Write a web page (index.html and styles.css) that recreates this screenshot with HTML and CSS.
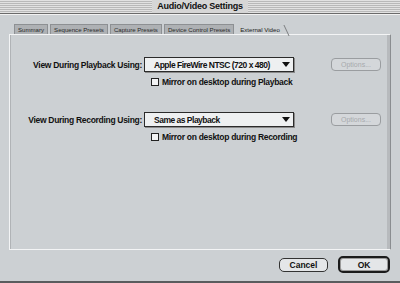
FILE: index.html
```html
<!DOCTYPE html>
<html lang="en">
  <head>
    <meta charset="UTF-8" />
    <title>Audio/Video Settings</title>
    <link rel="stylesheet" href="styles.css">
  </head>

  <body>
    <div class="av-window">
      <div class="av-titlebar">
        <span class="av-title">Audio/Video Settings</span>
      </div>

      <div class="av-tabs">
        <div class="av-tab">Summary</div>
        <div class="av-tab">Sequence Presets</div>
        <div class="av-tab">Capture Presets</div>
        <div class="av-tab">Device Control Presets</div>
        <div class="av-tab av-tab-active">External Video</div>
      </div>

      <div class="av-panel">
        <div class="av-row">
          <label class="av-label">View During Playback Using:</label>
          <div class="av-popup">
            <span>Apple FireWire NTSC (720 x 480)</span>
            <span class="av-arrow"></span>
          </div>
          <button class="av-options" disabled>Options...</button>
        </div>
        <label class="av-check">
          <span class="av-box"></span>
          Mirror on desktop during Playback
        </label>

        <div class="av-row av-row-second">
          <label class="av-label">View During Recording Using:</label>
          <div class="av-popup">
            <span>Same as Playback</span>
            <span class="av-arrow"></span>
          </div>
          <button class="av-options" disabled>Options...</button>
        </div>
        <label class="av-check">
          <span class="av-box"></span>
          Mirror on desktop during Recording
        </label>
      </div>

      <div class="av-footer">
        <button class="av-btn">Cancel</button>
        <button class="av-btn av-btn-default">OK</button>
      </div>
    </div>
  </body>
</html>
```

FILE: styles.css
```css
html,
body {
  margin: 0;
  padding: 0;
}
body {
  width: 400px;
  height: 283px;
  overflow: hidden;
  background: #ccd0d3;
  font-family: "Liberation Sans", Arial, sans-serif;
  font-weight: bold;
  color: #111;
}
.av-window {
  height: 281px;
  display: flex;
  flex-direction: column;
  border-bottom: 2px solid #5a5c5e;
}

/* title bar */
.av-titlebar {
  height: 13px;
  display: flex;
  justify-content: center;
  align-items: center;
  background: repeating-linear-gradient(
    to bottom,
    #e2e2e2 0px,
    #e2e2e2 1px,
    #b9b9b9 1px,
    #b9b9b9 2px
  );
  border-bottom: 1px solid #6a6a6a;
  box-shadow: 0 1px 0 #f2f2f2;
}
.av-title {
  background: #d6d6d6;
  padding: 0 5px;
  font-size: 9px;
  line-height: 13px;
  letter-spacing: -0.25px;
}

/* tabs */
.av-tabs {
  display: flex;
  gap: 2px;
  padding: 10px 0 0 14px;
  height: 10px;
}
.av-tab {
  height: 10px;
  padding: 0 3px;
  background: #aeb1b4;
  border: 1px solid #8d9093;
  border-bottom: 0;
  font-size: 6.1px;
  font-weight: normal;
  line-height: 10px;
  color: #2a2a2a;
}
.av-tab-active {
  position: relative;
  background: transparent;
  border-color: transparent;
  color: #1a1a1a;
}
.av-tab-active::after {
  content: "";
  position: absolute;
  right: -4px;
  top: 0;
  width: 1px;
  height: 11px;
  background: #7c7e80;
  transform: skewX(25deg);
}

/* panel */
.av-panel {
  box-sizing: border-box;
  margin: 0 9px 0 9px;
  height: 216px;
  border-left: 1px solid #f3f4f5;
  border-top: 1px solid #f3f4f5;
  border-right: 1px solid #8a8d90;
  border-bottom: 1px solid #f3f4f5;
  box-shadow: inset -3px 0 0 #b7babd, inset 1px 0 0 #b0b3b6;
  padding-top: 22px;
}
.av-row {
  display: flex;
  align-items: center;
  height: 15px;
}
.av-row-second {
  margin-top: 25px;
}
.av-label {
  width: 132px;
  text-align: right;
  padding-right: 2px;
  font-size: 8.5px;
  letter-spacing: -0.3px;
}
.av-popup {
  box-sizing: border-box;
  width: 150px;
  height: 15px;
  display: flex;
  align-items: center;
  justify-content: space-between;
  padding: 0 3px 0 9px;
  background: #eef0f1;
  border: 1px solid #2b2b2b;
  box-shadow: 1px 1px 0 #8a8a8a;
  font-size: 8.5px;
  letter-spacing: -0.5px;
}
.av-arrow {
  width: 0;
  height: 0;
  border-left: 4px solid transparent;
  border-right: 4px solid transparent;
  border-top: 5px solid #111;
}
.av-options {
  margin-left: 37px;
  width: 50px;
  height: 13px;
  padding: 0;
  background: #d4d7da;
  border: 1px solid #9a9da0;
  border-radius: 4px;
  font-family: inherit;
  font-size: 7px;
  font-weight: normal;
  color: #a7aaad;
}
.av-check {
  display: flex;
  align-items: center;
  gap: 3px;
  margin: 5px 0 0 141px;
  font-size: 8.5px;
  letter-spacing: -0.3px;
}
.av-box {
  box-sizing: border-box;
  width: 8px;
  height: 8px;
  background: #f3f4f5;
  border: 1px solid #222;
}

/* bottom buttons */
.av-footer {
  display: flex;
  justify-content: flex-end;
  align-items: center;
  gap: 10px;
  padding: 6px 10px 0 0;
}
.av-btn {
  width: 49px;
  height: 14px;
  padding: 0;
  background: #e4e6e8;
  border: 1px solid #333;
  border-radius: 5px;
  font-family: inherit;
  font-weight: bold;
  font-size: 8.5px;
  color: #111;
}
.av-btn-default {
  width: 52px;
  height: 17px;
  border: 2px solid #1b1b1b;
  box-shadow: inset 0 0 0 1px #9a9a9a;
}
```
